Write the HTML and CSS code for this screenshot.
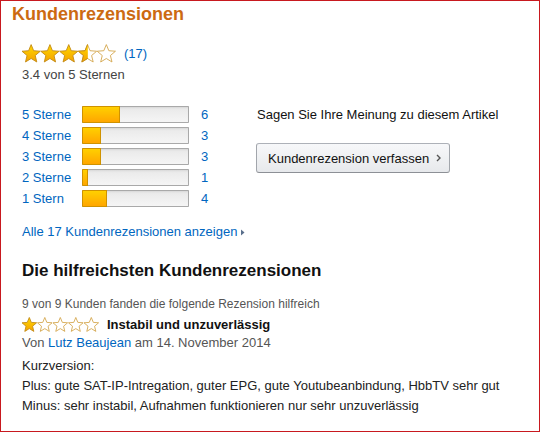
FILE: index.html
```html
<!DOCTYPE html>
<html lang="de">
<head>
<meta charset="utf-8">
<title>Kundenrezensionen</title>
<link rel="stylesheet" href="styles.css">
</head>
<body>
<div class="frame">
  <h2 class="title">Kundenrezensionen</h2>
  <div class="content">
    <div class="rating-row">
      <svg class="stars-lg" width="95" height="19" viewBox="0 0 95 19" aria-label="3.4 von 5 Sternen">
        <defs>
          <linearGradient id="gold" x1="0" y1="0" x2="0" y2="1">
            <stop offset="0" stop-color="#ffd800"/>
            <stop offset="1" stop-color="#f4a200"/>
          </linearGradient>
          <polygon id="star" points="10,0.6 12.53,6.72 19.13,7.23 14.09,11.53 15.64,17.97 10,14.5 4.36,17.97 5.91,11.53 0.87,7.23 7.47,6.72"/>
          <clipPath id="halfclip"><rect x="0" y="0" width="10.3" height="19"/></clipPath>
        </defs>
        <g transform="translate(-0.87,0)"><use href="#star" class="s-full"/></g>
        <g transform="translate(17.93,0)"><use href="#star" class="s-full"/></g>
        <g transform="translate(36.73,0)"><use href="#star" class="s-full"/></g>
        <g transform="translate(55.53,0)"><use href="#star" class="s-empty"/><use href="#star" class="s-full" clip-path="url(#halfclip)"/></g>
        <g transform="translate(74.33,0)"><use href="#star" class="s-empty"/></g>
      </svg>
      <a class="link count" href="#">(17)</a>
    </div>
    <div class="avg">3.4 von 5 Sternen</div>

    <div class="hist-wrap">
      <div class="hist">
        <a class="link" href="#">5 Sterne</a><div class="meter"><div class="fill" style="width:35.3%"></div></div><a class="link num" href="#">6</a>
        <a class="link" href="#">4 Sterne</a><div class="meter"><div class="fill" style="width:17.6%"></div></div><a class="link num" href="#">3</a>
        <a class="link" href="#">3 Sterne</a><div class="meter"><div class="fill" style="width:17.6%"></div></div><a class="link num" href="#">3</a>
        <a class="link" href="#">2 Sterne</a><div class="meter"><div class="fill" style="width:5.9%"></div></div><a class="link num" href="#">1</a>
        <a class="link" href="#">1 Stern</a><div class="meter"><div class="fill" style="width:23.5%"></div></div><a class="link num" href="#">4</a>
      </div>
      <div class="cta">
        <div class="cta-text">Sagen Sie Ihre Meinung zu diesem Artikel</div>
        <button class="btn" type="button">Kundenrezension verfassen<svg class="chev" width="5" height="8" viewBox="0 0 5 8"><path d="M1 1 L4 4 L1 7" fill="none" stroke="#555" stroke-width="1.4"/></svg></button>
      </div>
    </div>

    <a class="link all" href="#">Alle 17 Kundenrezensionen anzeigen<svg class="tri" width="4" height="7" viewBox="0 0 4 7"><polygon points="0,0.5 3.5,3.5 0,6.5" fill="#5a6f8c"/></svg></a>

    <h3 class="sub">Die hilfreichsten Kundenrezensionen</h3>

    <div class="review">
      <div class="helpful">9 von 9 Kunden fanden die folgende Rezension hilfreich</div>
      <div class="rev-title">
        <svg class="stars-sm" width="78" height="16" viewBox="0 0 78 16" aria-label="1 von 5 Sternen">
          <defs>
            <linearGradient id="gold2" x1="0" y1="0" x2="0" y2="1">
              <stop offset="0" stop-color="#ffd800"/>
              <stop offset="1" stop-color="#f4a200"/>
            </linearGradient>
            <polygon id="star2" points="10,0.6 12.53,6.72 19.13,7.23 14.09,11.53 15.64,17.97 10,14.5 4.36,17.97 5.91,11.53 0.87,7.23 7.47,6.72"/>
          </defs>
          <g transform="translate(-0.7,1) scale(0.8)"><use href="#star2" class="s2-full"/></g>
          <g transform="translate(14.8,1) scale(0.8)"><use href="#star2" class="s2-empty"/></g>
          <g transform="translate(30.3,1) scale(0.8)"><use href="#star2" class="s2-empty"/></g>
          <g transform="translate(45.8,1) scale(0.8)"><use href="#star2" class="s2-empty"/></g>
          <g transform="translate(61.3,1) scale(0.8)"><use href="#star2" class="s2-empty"/></g>
        </svg>
        <span class="rev-head">Instabil und unzuverlässig</span>
      </div>
      <div class="byline">Von <a class="link" href="#">Lutz Beaujean</a> am 14. November 2014</div>
      <div class="rev-body">
        <div>Kurzversion:</div>
        <div>Plus: gute SAT-IP-Intregation, guter EPG, gute Youtubeanbindung, HbbTV sehr gut</div>
        <div>Minus: sehr instabil, Aufnahmen funktionieren nur sehr unzuverlässig</div>
      </div>
    </div>
  </div>
</div>
</body>
</html>
```

FILE: styles.css
```css
html, body {
  margin: 0;
  padding: 0;
  background: #fff;
}

body {
  font-family: "Liberation Sans", Arial, sans-serif;
  font-size: 13px;
  color: #111;
}

.frame {
  box-sizing: border-box;
  width: 540px;
  height: 432px;
  border: 1px solid #c8191f;
  padding: 2px 0 0 11px;
  overflow: hidden;
}

.title {
  margin: 0;
  font-size: 18px;
  line-height: 22px;
  font-weight: bold;
  color: #cc6a12;
}

.content {
  padding-left: 10px;
}

.link {
  color: #0066c0;
  text-decoration: none;
}

.rating-row {
  margin-top: 19px;
  display: flex;
  align-items: center;
  height: 19px;
}

.stars-lg,
.stars-sm {
  display: block;
}

.s-full { fill: url(#gold); stroke: #c38a16; stroke-width: 0.9; }
.s-empty { fill: #fff; stroke: #d4a64c; stroke-width: 0.9; }
.s2-full { fill: url(#gold2); stroke: #c38a16; stroke-width: 1.1; }
.s2-empty { fill: #fff; stroke: #d4a64c; stroke-width: 1.1; }

.count {
  margin-left: 7px;
  line-height: 18px;
}

.avg {
  margin-top: 3px;
  line-height: 18px;
  color: #444;
}

.hist-wrap {
  margin-top: 20px;
  display: flex;
  align-items: flex-start;
}

.hist {
  display: grid;
  grid-template-columns: 60px 107px 18px;
  grid-auto-rows: 21px;
  align-items: center;
}

.meter {
  height: 17px;
  background: linear-gradient(#e8e8e8, #f6f6f6);
  box-shadow: inset 0 0 0 1px #a9a9a9, inset 0 2px 2px rgba(0, 0, 0, 0.08);
  border-radius: 1px;
  overflow: hidden;
}

.fill {
  box-sizing: border-box;
  height: 17px;
  border: 1px solid #cf9200;
  background: linear-gradient(#ffd000, #ffa600);
}

.num {
  padding-left: 12px;
}

.cta {
  margin-left: 49px;
}

.cta-text {
  line-height: 21px;
  padding-left: 1px;
}

.btn {
  margin-top: 18px;
  box-sizing: border-box;
  height: 30px;
  width: 194px;
  display: flex;
  align-items: center;
  gap: 7px;
  padding: 0 0 0 11px;
  border: 1px solid;
  border-color: #adb1b8 #a2a6ac #8d9096;
  border-radius: 3px;
  background: linear-gradient(#f7f8fa, #e7e9ec);
  font-family: "Liberation Sans", Arial, sans-serif;
  font-size: 13px;
  color: #111;
}

.chev {
  display: block;
}

.all {
  margin-top: 14px;
  display: flex;
  width: fit-content;
  align-items: center;
  gap: 4px;
  line-height: 18px;
}

.tri {
  display: block;
}

.sub {
  margin: 19px 0 0;
  font-size: 17px;
  line-height: 22px;
  font-weight: bold;
  color: #111;
}

.helpful {
  margin-top: 13px;
  font-size: 12px;
  line-height: 19px;
  color: #555;
}

.rev-title {
  display: flex;
  align-items: center;
  gap: 7px;
  height: 20px;
}

.rev-head {
  font-weight: bold;
  color: #111;
}

.byline {
  line-height: 18px;
  color: #555;
}

.rev-body {
  margin-top: 4px;
  line-height: 20px;
  color: #222;
}
```
